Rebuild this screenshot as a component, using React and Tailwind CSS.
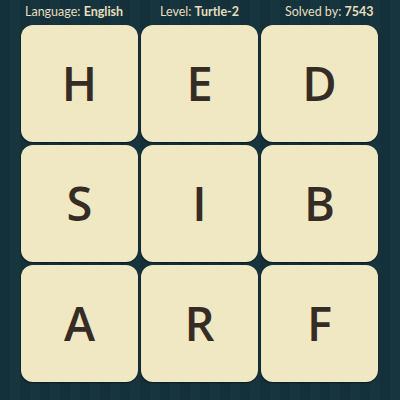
export default function App() {
  const letters = ["H", "E", "D", "S", "I", "B", "A", "R", "F"];
  return (
    <div
      className="w-[400px] h-[400px] overflow-hidden bg-[repeating-linear-gradient(90deg,#14303a_0px,#14303a_10px,#17353f_10px,#17353f_20px)] flex flex-col"
      style={{ fontFamily: "Lato, 'Open Sans', sans-serif" }}
    >
      <div className="h-[25px] flex items-center text-[12.5px] leading-none text-[#e6dfbd] pb-[1px]">
        <div className="w-[160px] shrink-0 pl-[25px] whitespace-nowrap">
          <span>Language: </span>
          <span className="font-bold">English</span>
        </div>
        <div className="w-[125px] shrink-0 whitespace-nowrap">
          <span>Level: </span>
          <span className="font-bold">Turtle-2</span>
        </div>
        <div className="whitespace-nowrap">
          <span>Solved by: </span>
          <span className="font-bold">7543</span>
        </div>
      </div>
      <div className="ml-[21px] grid grid-cols-[117px_117px_117px] grid-rows-[117px_117px_117px] gap-[3px]">
        {letters.map((l, i) => (
          <div
            key={i}
            className="rounded-[12px] bg-[#f0e8c2] shadow-[0_1px_2px_rgba(0,0,0,0.5)] flex items-center justify-center"
          >
            <span
              className="text-[47px] font-semibold text-[#352d25] leading-none"
              style={{ fontFamily: "'Open Sans', Lato, sans-serif" }}
            >
              {l}
            </span>
          </div>
        ))}
      </div>
    </div>
  );
}
